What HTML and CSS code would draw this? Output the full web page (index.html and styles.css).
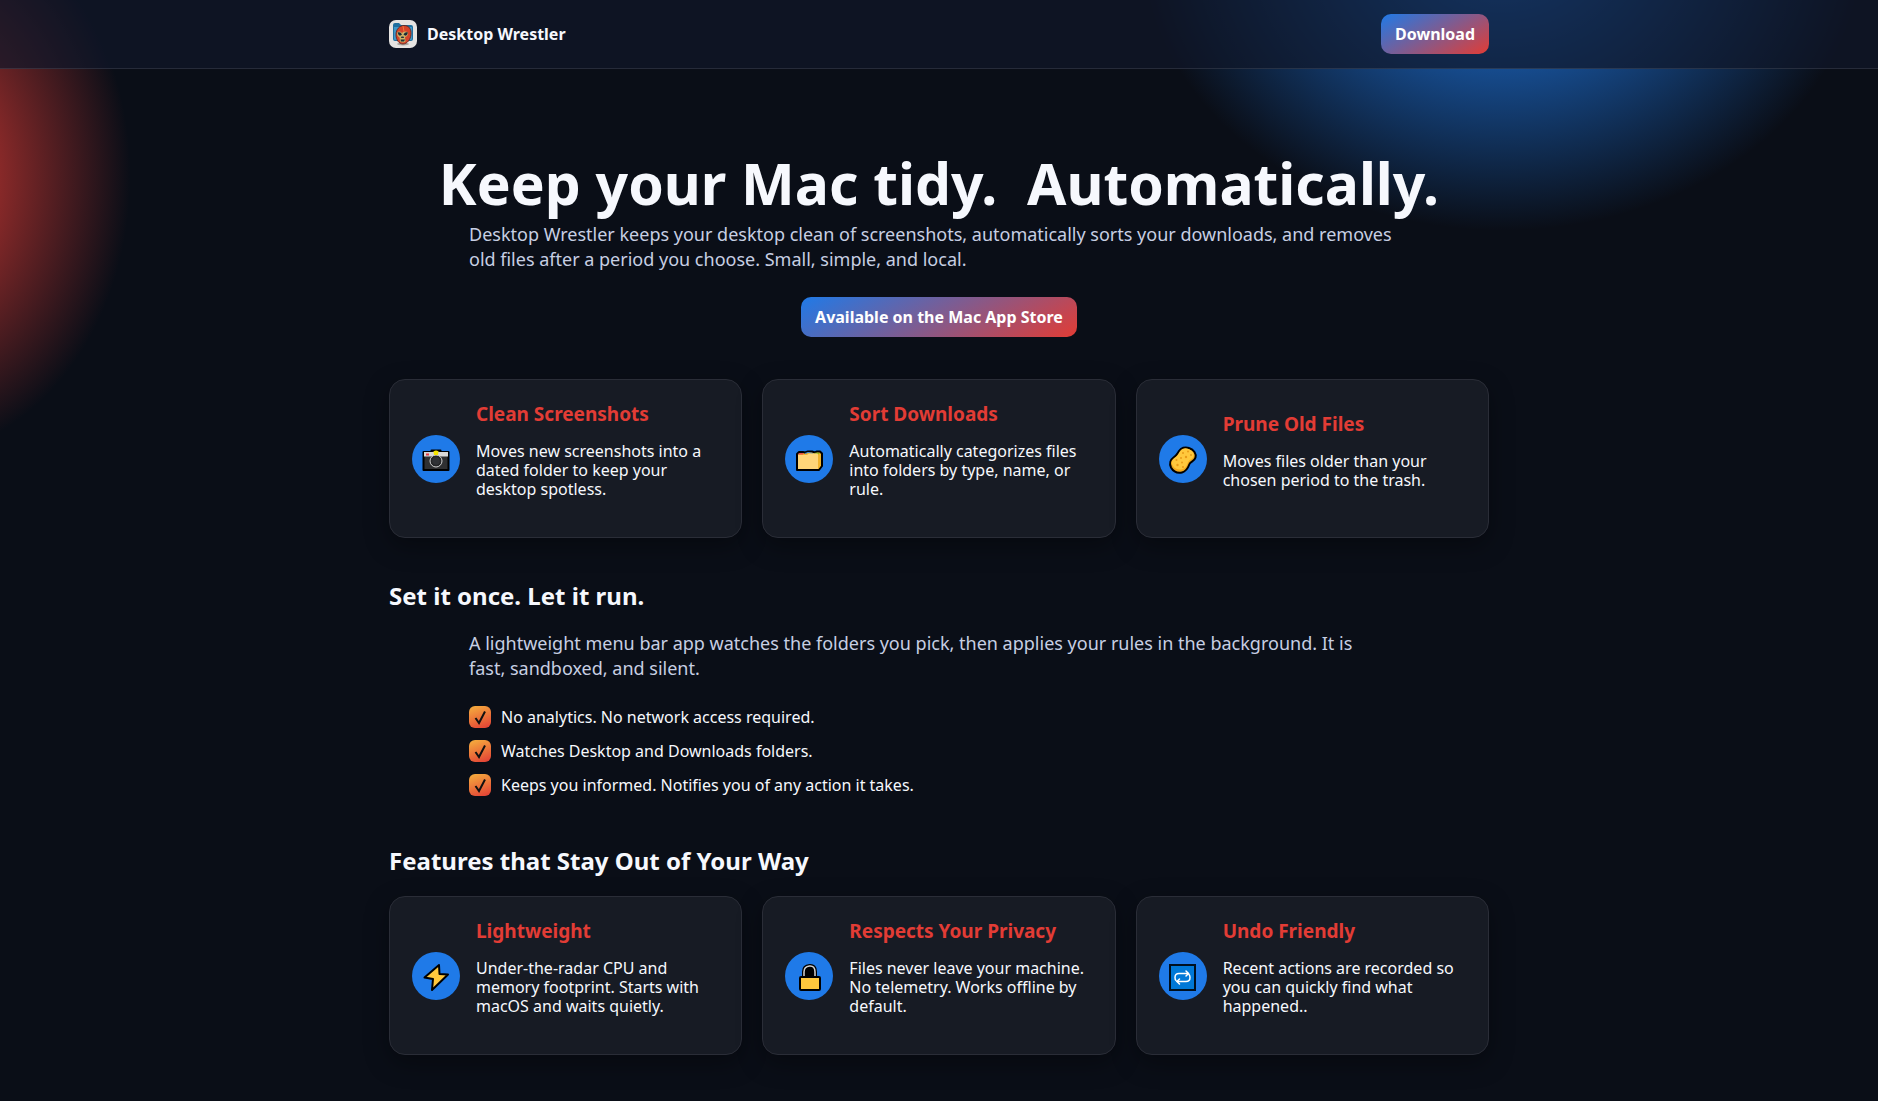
FILE: index.html
```html
<!DOCTYPE html>
<html lang="en">
<head>
    <meta charset="UTF-8">
    <meta name="viewport" content="width=device-width, initial-scale=1.0">
    <title>Desktop Wrestler</title>
    <link rel="stylesheet" href="styles.css">
</head>
<body>
    <header class="site-header">
        <div class="container nav">
            <a class="brand" href="#">
                <svg class="brand-logo" viewBox="0 0 28 28" aria-hidden="true">
                    <rect width="28" height="28" rx="7" fill="#e6e4e2"/>
                    <path d="M4 5q0-2 2-2h4l2 2h10q2 0 2 2v12q0 2-2 2H6q-2 0-2-2z" fill="#1f6f9f"/>
                    <path d="M5 7h18v12q0 1-1 1H6q-1 0-1-1z" fill="#3f97c9"/>
                    <ellipse cx="14" cy="24" rx="6" ry="1.5" fill="#a9a5a0"/>
                    <path d="M15 5.500c5 0 7.500 3.500 7 9-.4 5-4 9.500-8 9.500s-7-4-7-9.500c0-5 3.500-9 8-9z" fill="#d5442a" stroke="#5c2018" stroke-width=".8"/>
                    <path d="M8 12.500q2.500-2 5 .5 3-2.500 6-.5 0 4-3 4.500l.5 4.500q-2.500 2-5.500 0l-.5-4q-2.500-1-2.500-5z" fill="#cdb065"/>
                    <path d="M8.500 12.500q3-1 4.500 2-3 3-4.500-2zm6 2q1.500-3 4.500-2-1.500 5-4.500 2z" fill="#172c39"/>
                    <path d="M12.500 16.500h2l.6 1.500h-3.200zM11.500 19.500h4.500l-1 2h-3z" fill="#20333b"/>
                    <path d="M14 6l1 5.500" stroke="#f0793c"/>
                </svg>
                <span>Desktop Wrestler</span>
            </a>
            <a class="btn" href="#download">Download</a>
        </div>
    </header>

    <main class="container">
        <section class="hero">
            <h1>Keep your Mac tidy.&nbsp; Automatically.</h1>
            <p class="lead">Desktop Wrestler keeps your desktop clean of screenshots, automatically sorts your downloads, and removes old files after a period you choose. Small, simple, and local.</p>
            <a class="btn" id="download" href="#">Available on the Mac App Store</a>
        </section>

        <section class="cards">
            <article class="card">
                <div class="icon">
                    <svg viewBox="0 -1 28 28" aria-hidden="true">
                        <path d="M1.500 6h8V4.500h9V6h8v18h-25z" fill="#2f3032" stroke="#000" stroke-width="2" stroke-linejoin="round"/>
                        <path d="M2 6h24v4.500H2z" fill="#d8d8d8"/>
                        <path d="M4 7.500h3v2H4z" fill="#e63b45"/>
                        <circle cx="14" cy="15" r="6" fill="#252628" stroke="#d2d2d2" stroke-width="1"/>
                        <circle cx="14" cy="15" r="3.800" fill="#303236"/>
                        <path d="M11.500 5.500q2.500-2 5 0l-.5 3.500h-4z" fill="#f5e500"/>
                    </svg>
                </div>
                <div class="card-text">
                    <h3>Clean Screenshots</h3>
                    <p>Moves new screenshots into a dated folder to keep your desktop spotless.</p>
                </div>
            </article>
            <article class="card">
                <div class="icon">
                    <svg viewBox="0 -1 28 28" aria-hidden="true">
                        <path d="M2 8l2-2h4l2 .5L13 5.500h4l3 1 2-1h3l2 2V20l-3 4H2z" fill="#f2b42d" stroke="#000" stroke-width="2" stroke-linejoin="round"/>
                        <path d="M4 7h4.500L8 8.500H3z" fill="#e84a4a"/>
                        <path d="M19 7l3-.5 3 1-3 1.500z" fill="#86b817"/>
                        <path d="M10 7.500l3-1 5 1" fill="none" stroke="#3d92e5"/>
                        <path d="M3 9h9l2-1.500h8q1 0 1 1V23H3z" fill="#ffd679"/>
                    </svg>
                </div>
                <div class="card-text">
                    <h3>Sort Downloads</h3>
                    <p>Automatically categorizes files into folders by type, name, or rule.</p>
                </div>
            </article>
            <article class="card">
                <div class="icon">
                    <svg viewBox="0 -1 28 28" aria-hidden="true">
                        <path d="M10 5c2-3 6-4.500 10-3 5 1.500 7.500 6 6.500 9.500-1 4-5 4-6 6.500-1.500 4-3 7.500-7.500 8.500-5 1-9-1.500-11-5-2-4-.5-8 2.500-10C7.500 9.500 8 8 10 5z" fill="#f3a91c" stroke="#000" stroke-width="2"/>
                        <path d="M11 5.500c2-2.500 5-4 8.500-2.500 4 1.500 6 4.500 5 7.500-1 3-4.500 3-5.500 6-1.500 4-3 6-6.500 7-4 .5-7-1-8.500-3.500-2-3-1-6 1.500-8C9 10 9 8.500 11 5.500z" fill="#ffc83d"/>
                        <g fill="#e99a19">
                            <circle cx="14" cy="7" r="1"/><circle cx="19" cy="5.500" r="1"/><circle cx="22" cy="9" r="1"/>
                            <circle cx="17" cy="11" r="1.200"/><circle cx="12" cy="12" r="1"/><circle cx="7.500" cy="14" r="1"/>
                            <circle cx="13" cy="16.500" r="1"/><circle cx="8.500" cy="19" r="1.200"/><circle cx="14" cy="21" r="1"/>
                        </g>
                    </svg>
                </div>
                <div class="card-text">
                    <h3>Prune Old Files</h3>
                    <p>Moves files older than your chosen period to the trash.</p>
                </div>
            </article>
        </section>

        <section class="section">
            <h2>Set it once. Let it run.</h2>
            <p class="lead">A lightweight menu bar app watches the folders you pick, then applies your rules in the background. It is fast,&nbsp;sandboxed, and silent.</p>
            <ul class="checks">
                <li><span class="check"><svg viewBox="0 0 22 22" aria-hidden="true"><path d="M6.500 12l3.500 5L16 5.500"/></svg></span>No analytics. No network access required.</li>
                <li><span class="check"><svg viewBox="0 0 22 22" aria-hidden="true"><path d="M6.500 12l3.500 5L16 5.500"/></svg></span>Watches Desktop and Downloads folders.</li>
                <li><span class="check"><svg viewBox="0 0 22 22" aria-hidden="true"><path d="M6.500 12l3.500 5L16 5.500"/></svg></span>Keeps you informed. Notifies you of any action it takes.</li>
            </ul>
        </section>

        <section class="section">
            <h2>Features that Stay Out of Your Way</h2>
            <div class="cards">
                <article class="card">
                    <div class="icon">
                        <svg viewBox="0 0 28 28" aria-hidden="true">
                            <path d="M17 3L2.500 15.500l8.500 1.500L10 28l16-15.500-8.500-.5z" fill="#ffc83d" stroke="#000" stroke-width="2" stroke-linejoin="round"/>
                        </svg>
                    </div>
                    <div class="card-text">
                        <h3>Lightweight</h3>
                        <p>Under-the-radar CPU and memory footprint. Starts with macOS and waits quietly.</p>
                    </div>
                </article>
                <article class="card">
                    <div class="icon">
                        <svg viewBox="0 0 28 28" aria-hidden="true">
                            <path d="M8 16V9.500q0-6 6.500-6.500T21 9.500V16z" fill="#000" stroke="#000" stroke-width="2"/>
                            <path d="M9 15V10q0-5.500 5.500-6T20 10v5" fill="none" stroke="#d3d3d3" stroke-width="1.500"/>
                            <rect x="5" y="15" width="20" height="13" rx="1" fill="#ffc83d" stroke="#000" stroke-width="2"/>
                        </svg>
                    </div>
                    <div class="card-text">
                        <h3>Respects Your Privacy</h3>
                        <p>Files never leave your machine. No telemetry. Works offline by default.</p>
                    </div>
                </article>
                <article class="card">
                    <div class="icon">
                        <svg viewBox="1 -1 28 28" aria-hidden="true">
                            <rect x="2" y="2" width="25" height="25" fill="#0078d7" stroke="#00101f" stroke-width="2"/>
                            <g fill="none" stroke="#fff" stroke-width="1.500" stroke-linecap="round">
                                <path d="M8 17.500q-1-1-1-3 0-4 4-4h9M21 11.500q1 1 1 3 0 4-4 4H9"/>
                                <path d="M18 8l2.500 2.500L18 13M11.500 16L9 18.500l2.500 2.500"/>
                            </g>
                        </svg>
                    </div>
                    <div class="card-text">
                        <h3>Undo Friendly</h3>
                        <p>Recent actions are recorded so you can quickly find what happened..</p>
                    </div>
                </article>
            </div>
        </section>
    </main>
</body>
</html>
```
FILE: styles.css
```css
:root {
    --bg: #0a0e17;
    --text: #f6f8fd;
    --muted: #c7cfe3;
    --blue: #1f7ae8;
    --red: #e23c35;
    --card: #171b24;
    --border: #2a2d37;
}

* {
    box-sizing: border-box;
    margin: 0;
    padding: 0;
}

body {
    min-height: 100vh;
    font-family: "Noto Sans", "Open Sans", sans-serif;
    font-size: 16px;
    line-height: 19px;
    color: var(--text);
    background:
        radial-gradient(600px 476px at 80% -5%, var(--blue), transparent 60%) no-repeat,
        radial-gradient(374px 470px at -5% 16%, var(--red), transparent 60%) no-repeat,
        var(--bg);
}

a {
    color: inherit;
    text-decoration: none;
}

.container {
    max-width: 1140px;
    margin: 0 auto;
    padding: 0 20px;
}

.site-header {
    background: rgba(16, 23, 42, 0.7);
    border-bottom: 1px solid rgba(255, 255, 255, 0.1);
}

.nav {
    display: flex;
    justify-content: space-between;
    align-items: center;
    padding-top: 14px;
    padding-bottom: 14px;
}

.brand {
    display: flex;
    align-items: center;
    gap: 10px;
    font-weight: 700;
}

.brand-logo {
    width: 28px;
    height: 28px;
}

.btn {
    display: inline-block;
    padding: 10px 14px;
    border-radius: 10px;
    background: linear-gradient(150deg, var(--blue), var(--red));
    color: #fff;
    font-weight: 700;
    line-height: 20px;
}

.hero {
    padding: 80px 0 42px;
    text-align: center;
}

h1 {
    font-size: 57px;
    line-height: 68px;
    margin-bottom: 5px;
}

h2 {
    font-size: 24px;
    line-height: 32px;
}

h3 {
    margin-bottom: 16px;
    font-size: 19px;
    line-height: 24px;
    color: var(--red);
}

.lead {
    max-width: 940px;
    margin: 0 auto 25px;
    font-size: 18px;
    line-height: 25px;
    color: var(--muted);
    text-align: left;
}

.cards {
    display: grid;
    grid-template-columns: repeat(3, 1fr);
    gap: 20px;
}

.card {
    display: flex;
    align-items: center;
    gap: 16px;
    padding: 22px;
    background: var(--card);
    border: 1px solid var(--border);
    border-radius: 16px;
    box-shadow: 0 8px 24px rgba(0, 0, 0, 0.35);
}

.card-text p {
    margin-bottom: 16px;
}

.icon {
    display: flex;
    flex: none;
    align-items: center;
    justify-content: center;
    width: 48px;
    height: 48px;
    border-radius: 50%;
    background: var(--blue);
}

.icon svg {
    width: 28px;
    height: 28px;
    overflow: visible;
}

.section {
    padding-top: 42px;
}

.section h2 {
    margin-bottom: 19px;
}

.checks {
    display: grid;
    gap: 12px;
    max-width: 940px;
    margin: 0 auto 7px;
    list-style: none;
}

.checks li {
    display: flex;
    align-items: center;
    gap: 10px;
}

.check {
    width: 22px;
    height: 22px;
    border-radius: 6px;
    background: linear-gradient(160deg, #f6b13e, var(--red));
}

.check svg {
    display: block;
    fill: none;
    stroke: #111;
    stroke-width: 2;
}

@media (max-width: 900px) {
    .cards {
        grid-template-columns: 1fr;
    }
}
```
